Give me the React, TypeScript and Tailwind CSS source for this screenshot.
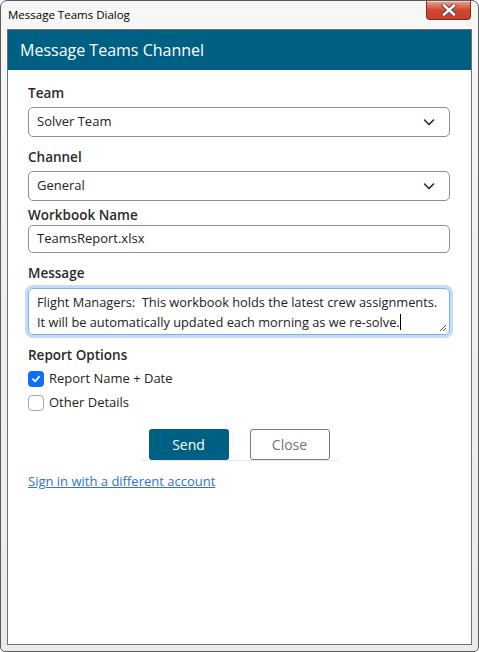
import React from "react";

const font = { fontFamily: '"Open Sans", "Noto Sans", sans-serif' };

function Chevron() {
  return (
    <svg width="14" height="14" viewBox="0 0 14 14" fill="none">
      <path d="M2.5 5 L7 9.5 L11.5 5" stroke="#2b2b2b" strokeWidth="1.6" strokeLinecap="round" strokeLinejoin="round" />
    </svg>
  );
}

function Select({ value }: { value: string }) {
  return (
    <div className="h-[30px] w-full rounded-[5px] border border-[#8f8f8f] bg-white flex items-center justify-between pl-[8px] pr-[13px] text-[13px] text-[#222]">
      <span>{value}</span>
      <Chevron />
    </div>
  );
}

function Label({ children }: { children: React.ReactNode }) {
  return <div className="h-[18px] leading-[18px] text-[13.5px] font-semibold text-[#2a2a2a]">{children}</div>;
}

export default function App() {
  return (
    <div className="w-[479px] h-[652px] bg-white" style={font}>
      <div className="w-full h-full flex flex-col rounded-t-[7px] rounded-b-[5px] border border-[#5a5a5a] bg-gradient-to-b from-[#f7f7f7] via-[#efefef] to-[#ebebeb] px-[6px] pb-[6px]">
        <div className="h-[28px] flex items-start justify-between">
          <div className="pt-[6px] pl-[1px] text-[11.5px] text-black leading-[16px]">Message Teams Dialog</div>
          <div className="mr-[1px] w-[45px] h-[19px] rounded-b-[4px] border border-t-0 border-[#7a2a1e] bg-gradient-to-b from-[#e8a493] via-[#d0472f] to-[#c8412a] flex items-center justify-center shadow-[inset_0_1px_0_rgba(255,255,255,0.5)]">
            <svg width="16" height="12" viewBox="0 0 16 12">
              <path d="M3 1.5 L13 10.5 M13 1.5 L3 10.5" stroke="#4a4a4a" strokeWidth="4.2" strokeLinecap="square" />
              <path d="M3 1.5 L13 10.5 M13 1.5 L3 10.5" stroke="#ffffff" strokeWidth="2.4" strokeLinecap="square" />
            </svg>
          </div>
        </div>
        <div className="flex-1 border border-[#707070] bg-white flex flex-col">
          <div className="h-[40px] bg-[#006083] flex items-center pl-[12px] text-[16px] text-white">Message Teams Channel</div>
          <div className="pl-[20px] pr-[21px] pt-[14px] flex flex-col">
            <Label>Team</Label>
            <div className="mt-[5px]"><Select value="Solver Team" /></div>
            <div className="mt-[11px]"><Label>Channel</Label></div>
            <div className="mt-[5px]"><Select value="General" /></div>
            <div className="mt-[5px]"><Label>Workbook Name</Label></div>
            <div className="mt-[1px] h-[28px] w-full rounded-[5px] border border-[#8f8f8f] flex items-center pl-[8px] text-[13px] text-[#222]">TeamsReport.xlsx</div>
            <div className="mt-[11px]"><Label>Message</Label></div>
            <div className="mt-[6px] relative h-[47px] w-full rounded-[5px] border border-[#7fb0f5] shadow-[0_0_0_3px_#c5dbfb] pl-[8px] pt-[3px] text-[12.8px] leading-[20px] text-[#222]">
              <div>Flight Managers:&nbsp; This workbook holds the latest crew assignments.</div>
              <div>
                It will be automatically updated each morning as we re-solve.
                <span className="inline-block w-[1px] h-[16px] bg-black align-[-3px]" />
              </div>
              <svg className="absolute right-[2px] bottom-[2px]" width="9" height="9" viewBox="0 0 9 9">
                <path d="M8 2 L2 8 M8 5 L5 8" stroke="#555" strokeWidth="1" />
              </svg>
            </div>
            <div className="mt-[11px]"><Label>Report Options</Label></div>
            <div className="mt-[6px] flex items-center h-[18px] gap-[5px]">
              <div className="w-[16px] h-[16px] rounded-[4px] bg-[#0d6efd] flex items-center justify-center">
                <svg width="10" height="10" viewBox="0 0 10 10">
                  <path d="M2 5.2 L4.2 7.3 L8 2.8" stroke="white" strokeWidth="1.8" fill="none" strokeLinecap="round" strokeLinejoin="round" />
                </svg>
              </div>
              <span className="text-[13px] text-[#222]">Report Name + Date</span>
            </div>
            <div className="mt-[6px] flex items-center h-[18px] gap-[5px]">
              <div className="w-[16px] h-[16px] rounded-[4px] border border-[#a9a9a9] bg-white" />
              <span className="text-[13px] text-[#222]">Other Details</span>
            </div>
            <div className="mt-[17px] self-center flex gap-[21px] px-[8px] border-b border-[#e8e8e8]">
              <div className="w-[80px] h-[31px] rounded-[3px] bg-[#006083] text-white text-[14px] flex items-center justify-center">Send</div>
              <div className="w-[80px] h-[31px] rounded-[3px] border border-[#7a7a7a] bg-white text-[#6c757d] text-[14px] flex items-center justify-center">Close</div>
            </div>
            <div className="mt-[11px] text-[13px] text-[#2f74d0] underline leading-[18px]">Sign in with a different account</div>
          </div>
        </div>
      </div>
    </div>
  );
}
